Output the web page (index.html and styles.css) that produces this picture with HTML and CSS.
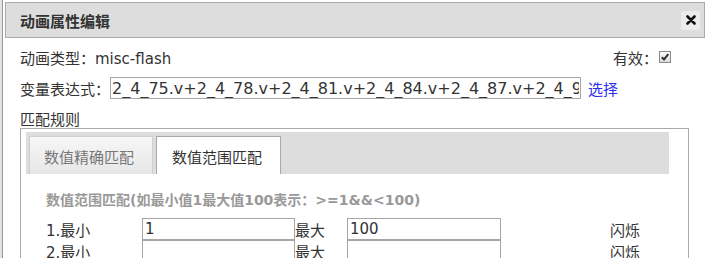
FILE: index.html
```html
<!DOCTYPE html>
<html lang="zh">
<head>
<meta charset="utf-8">
<title>动画属性编辑</title>
<link rel="stylesheet" href="styles.css">
</head>
<body>
<div class="frame">
  <div class="titlebar">
    <span class="title">动画属性编辑</span>
    <button class="close" type="button" aria-label="关闭">
      <svg width="10" height="10" viewBox="0 0 10 10"><path d="M1.5 1.5 L8.5 8.5 M8.5 1.5 L1.5 8.5" stroke="#111" stroke-width="2.6" stroke-linecap="round"/></svg>
    </button>
  </div>
  <div class="content">
    <div class="row row-type">
      <span>动画类型：misc-flash</span>
      <span class="valid">有效：<span class="cb"><svg width="10" height="10" viewBox="0 0 10 10"><path d="M1.8 5.2 L4 7.5 L8.3 2.2" stroke="#333" stroke-width="2" fill="none"/></svg></span></span>
    </div>
    <div class="row row-expr">
      <span>变量表达式：</span>
      <input class="expr" type="text" value="2_4_75.v+2_4_78.v+2_4_81.v+2_4_84.v+2_4_87.v+2_4_90.v+2_4_93.v">
      <a class="pick" href="#">选择</a>
    </div>
    <div class="row row-rules">匹配规则</div>
    <div class="rulebox">
      <div class="tabs">
        <div class="tab">数值精确匹配</div>
        <div class="tab active">数值范围匹配</div>
      </div>
      <div class="panel">
        <div class="hint">数值范围匹配(如最小值1最大值100表示：&gt;=1&amp;&amp;&lt;100)</div>
        <div class="grid">
          <span class="lbl">1.最小</span>
          <input class="num" type="text" value="1">
          <span class="lbl">最大</span>
          <input class="num" type="text" value="100">
          <span></span>
          <span class="lbl">闪烁</span>

          <span class="lbl">2.最小</span>
          <input class="num" type="text" value="">
          <span class="lbl">最大</span>
          <input class="num" type="text" value="">
          <span></span>
          <span class="lbl">闪烁</span>
        </div>
      </div>
    </div>
  </div>
</div>
</body>
</html>
```
FILE: styles.css
```css
html, body {
  margin: 0;
  height: 258px;
  overflow: hidden;
  background: #fff;
}
body {
  font: 15px "DejaVu Sans", "Noto Sans CJK SC", sans-serif;
  color: #333;
}
.frame {
  margin-left: 2px;
  border-left: 1px solid #999;
  box-shadow: -2px 0 0 #e2e2e2;
  padding: 2px 0 0 2px;
  height: 100%;
  box-sizing: border-box;
}
.titlebar {
  box-sizing: border-box;
  width: 700px;
  height: 36px;
  border: 1px solid #aaa;
  background: #dddddd;
  display: flex;
  align-items: center;
  justify-content: space-between;
  padding: 0 4px 0 14px;
}
.title {
  font-weight: bold;
  font-family: "Noto Sans CJK SC", sans-serif;
  font-size: 15px;
  color: #333;
}
.close {
  width: 19px;
  height: 19px;
  padding: 0;
  border: none;
  border-radius: 2px;
  background: #ececec;
  display: flex;
  align-items: center;
  justify-content: center;
}
.content {
  padding-left: 15px;
}
.row {
  display: flex;
  align-items: center;
}
.row-type {
  margin-top: 8px;
  height: 22px;
  width: 651px;
  justify-content: space-between;
}
.valid {
  display: flex;
  align-items: center;
}
.cb {
  box-sizing: border-box;
  width: 12px;
  height: 12px;
  border: 1px solid #8a8a8a;
  background: linear-gradient(#fdfdfd, #dcdcdc);
  display: flex;
  align-items: center;
  justify-content: center;
  margin-left: 1px;
}
.row-expr {
  margin-top: 9px;
  height: 22px;
}
.expr {
  box-sizing: border-box;
  width: 471px;
  height: 22px;
  border: 1px solid #a6a6a6;
  padding: 0 1px;
  margin: 0;
  font: 16px "DejaVu Sans", sans-serif;
  color: #333;
  outline: none;
}
.pick {
  margin-left: 7px;
  color: #2a2af0;
  text-decoration: none;
}
.row-rules {
  margin-top: 9px;
  height: 20px;
}
.rulebox {
  box-sizing: border-box;
  width: 669px;
  height: 200px;
  border: 1px solid #aaa;
  padding: 3px 0 0 5px;
}
.tabs {
  box-sizing: border-box;
  width: 643px;
  height: 42px;
  background: #dddddd;
  display: flex;
  align-items: flex-end;
  gap: 3px;
  padding-left: 3px;
}
.tab {
  box-sizing: border-box;
  width: 124px;
  height: 38px;
  border: 1px solid #cfcfcf;
  border-bottom: none;
  background: linear-gradient(#f7f7f7, #e6e6e6);
  color: #777;
  padding: 2px 0 0 14px;
  display: flex;
  align-items: center;
}
.tab.active {
  width: 125px;
  background: #fff;
  border-color: #a8a8a8;
  color: #333;
  padding-left: 15px;
}
.panel {
  padding: 17px 0 0 20px;
}
.hint {
  font-weight: bold;
  font-size: 14px;
  line-height: 18px;
  color: #999;
}
.grid {
  margin-top: 9px;
  display: grid;
  grid-template-columns: 96px 153px 52px 154px 109px auto;
  grid-auto-rows: 22px;
  align-items: center;
}
.num {
  box-sizing: border-box;
  width: 100%;
  height: 22px;
  border: 1px solid #a6a6a6;
  padding: 0 2px;
  margin: 0;
  font: 15px "DejaVu Sans", sans-serif;
  color: #333;
  outline: none;
}
.lbl {
  white-space: nowrap;
}
```
